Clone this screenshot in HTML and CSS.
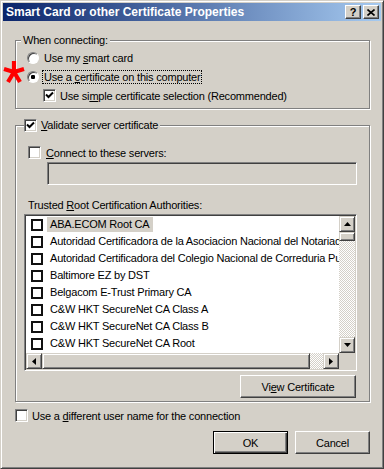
FILE: index.html
```html
<!DOCTYPE html>
<html lang="en">
<head>
  <meta charset="UTF-8" />
  <title>Smart Card or other Certificate Properties</title>
  <link rel="stylesheet" href="styles.css">
</head>
<body>
  <div class="window">
    <div class="titlebar">
      <span class="title">Smart Card or other Certificate Properties</span>
      <div class="caption-buttons">
        <button class="cap-btn help">?</button>
        <button class="cap-btn close">
          <svg width="8" height="7" viewBox="0 0 8 7"><path d="M0.5 0.5 L7.5 6.5 M7.5 0.5 L0.5 6.5" stroke="#000" stroke-width="1.6" fill="none"/></svg>
        </button>
      </div>
    </div>

    <div class="client">
      <fieldset class="group group-connect">
        <legend>When connecting:</legend>
        <label class="row"><span class="radio"></span><span class="label">Use my <u>s</u>mart card</span></label>
        <label class="row"><span class="radio checked"></span><span class="label focus">Use a <u>c</u>ertificate on this computer</span></label>
        <label class="row indent"><span class="check checked"></span><span class="label">Use si<u>m</u>ple certificate selection (Recommended)</span></label>
      </fieldset>

      <fieldset class="group group-validate">
        <legend><span class="check checked"></span><span class="label"><u>V</u>alidate server certificate</span></legend>
        <label class="row"><span class="check"></span><span class="label"><u>C</u>onnect to these servers:</span></label>
        <div class="field disabled"></div>
        <div class="caption">Trusted <u>R</u>oot Certification Authorities:</div>

        <div class="listbox">
          <div class="items" id="certList"></div>
          <div class="vscroll">
            <div class="sb-btn"><svg width="7" height="4" viewBox="0 0 7 4"><path d="M3.5 0 L7 4 L0 4 Z" fill="#000"/></svg></div>
            <div class="sb-thumb v"></div>
            <div class="sb-track"></div>
            <div class="sb-btn"><svg width="7" height="4" viewBox="0 0 7 4"><path d="M0 0 L7 0 L3.5 4 Z" fill="#000"/></svg></div>
          </div>
          <div class="hscroll">
            <div class="sb-btn"><svg width="4" height="7" viewBox="0 0 4 7"><path d="M0 3.5 L4 0 L4 7 Z" fill="#000"/></svg></div>
            <div class="sb-thumb h"></div>
            <div class="sb-track"></div>
            <div class="sb-btn"><svg width="4" height="7" viewBox="0 0 4 7"><path d="M0 0 L4 3.5 L0 7 Z" fill="#000"/></svg></div>
          </div>
          <div class="corner"></div>
        </div>

        <div class="actions">
          <button class="btn view">Vi<u>e</u>w Certificate</button>
        </div>
      </fieldset>

      <label class="row bottom-check"><span class="check"></span><span class="label">Use a <u>d</u>ifferent user name for the connection</span></label>

      <div class="dialog-buttons">
        <button class="btn default">OK</button>
        <button class="btn">Cancel</button>
      </div>
    </div>

    <svg class="marker" width="22" height="24" viewBox="0 0 22 24">
      <path d="M11 12 L11 1 M11 12 L21 9 M11 12 L17 22 M11 12 L5 22 M11 12 L1 9" stroke="#ff0000" stroke-width="4.2" stroke-linecap="butt" fill="none"/>
    </svg>
  </div>

  <script>
    const certs = [
      "ABA.ECOM Root CA",
      "Autoridad Certificadora de la Asociacion Nacional del Notariado Mexicano",
      "Autoridad Certificadora del Colegio Nacional de Correduria Publica Mexicana",
      "Baltimore EZ by DST",
      "Belgacom E-Trust Primary CA",
      "C&W HKT SecureNet CA Class A",
      "C&W HKT SecureNet CA Class B",
      "C&W HKT SecureNet CA Root"
    ];

    const list = document.getElementById("certList");
    certs.forEach((name, i) => {
      const row = document.createElement("div");
      row.className = "item" + (i === 0 ? " selected" : "");
      const box = document.createElement("span");
      box.className = "flat-check";
      const text = document.createElement("span");
      text.className = "item-text";
      text.textContent = name;
      row.appendChild(box);
      row.appendChild(text);
      list.appendChild(row);
    });
  </script>
</body>
</html>
```

FILE: styles.css
```css
body { margin: 0; background: #d4d0c8; }

.window {
  position: relative;
  width: 384px; height: 469px; box-sizing: border-box;
  background: #d4d0c8; padding: 2px;
  border: 1px solid; border-color: #d4d0c8 #404040 #404040 #d4d0c8;
  box-shadow: inset 1px 1px #fff, inset -1px -1px #808080;
  font-family: "Liberation Sans", Arial, sans-serif; font-size: 11px; color: #000;
  letter-spacing: -0.2px;
}

/* title bar */
.titlebar {
  height: 18px; display: flex; align-items: center; justify-content: space-between;
  padding: 0 2px 0 3px;
  background: linear-gradient(to right, #0a246a, #a6caf0);
}
.title { color: #fff; font-weight: bold; font-size: 12px; letter-spacing: 0; }
.caption-buttons { display: flex; gap: 2px; }
.cap-btn {
  width: 16px; height: 14px; padding: 0; margin: 0; box-sizing: border-box;
  display: flex; align-items: center; justify-content: center;
  background: #d4d0c8; border: 1px solid; border-color: #fff #404040 #404040 #fff;
  box-shadow: inset -1px -1px #808080;
  font-family: "Liberation Sans", Arial, sans-serif; font-weight: bold; font-size: 11px; line-height: 1;
}

/* client area */
.client { padding: 13px 11px 0 12px; display: flex; flex-direction: column; }

.group {
  margin: 0; min-width: 0;
  border: 1px solid #808080;
  box-shadow: inset 1px 1px #fff, 1px 1px #fff;
}
.group legend {
  background: #d4d0c8; line-height: 13px; height: 13px;
  display: flex; align-items: center; gap: 4px;
}

.group-connect { padding: 1px 11px 3px 11px; }
.group-connect legend { margin-left: -6px; padding: 0 2px; }

.group-validate { margin-top: 9px; padding: 13px 12px 3px 12px; display: flex; flex-direction: column; }
.group-validate legend { margin-left: -4px; padding: 0 2px 0 0; height: 14px; }

.row { display: flex; align-items: center; height: 19px; gap: 5px; }
.row.indent { margin-left: 16px; gap: 4px; }
.group-validate .row { height: 15px; gap: 5px; }
.label u { text-decoration: underline; text-underline-offset: 1px; }
.focus { outline: 1px dotted #000; outline-offset: 0; padding: 0 1px; margin-left: -1px; }

/* 3d controls */
.radio {
  width: 12px; height: 12px; box-sizing: border-box; border-radius: 50%; flex: none;
  border: 1px solid; border-color: #808080 #fff #fff #808080;
  box-shadow: inset 1px 1px #404040;
  background: #fff;
}
.radio.checked { background: radial-gradient(circle, #000 0 2px, #fff 2.4px); }

.check {
  width: 13px; height: 13px; box-sizing: border-box; flex: none;
  border: 1px solid; border-color: #808080 #fff #fff #808080;
  box-shadow: inset 1px 1px #404040, inset -1px -1px #d4d0c8;
  background: #fff;
}
.check.checked {
  background: #fff url("data:image/svg+xml,%3Csvg xmlns='http://www.w3.org/2000/svg' width='11' height='11'%3E%3Cpath d='M2 4.5 L4.5 7 L9 2.5' stroke='%23000' stroke-width='2' fill='none'/%3E%3C/svg%3E") no-repeat 0 0;
}

.field {
  height: 23px; box-sizing: border-box; margin: 2px 0 0 19px;
  border: 1px solid; border-color: #808080 #fff #fff #808080;
  box-shadow: inset 1px 1px #404040, inset -1px -1px #d4d0c8;
}
.field.disabled { background: #d4d0c8; }

.caption { margin-top: 14px; line-height: 13px; }

/* list box */
.listbox {
  margin: 2px 0 0 -4px; height: 157px; box-sizing: border-box;
  border: 1px solid; border-color: #808080 #fff #fff #808080;
  box-shadow: inset 1px 1px #404040, inset -1px -1px #d4d0c8;
  padding: 1px;
  display: grid; grid-template-columns: 1fr 16px; grid-template-rows: 1fr 16px;
  background: #fff;
}
.items { overflow: hidden; padding-left: 5px; font-size: 11px; }
.item { height: 17px; display: flex; align-items: center; white-space: nowrap; }
.flat-check { width: 12px; height: 12px; box-sizing: border-box; border: 2px solid #111; flex: none; background: #fff; }
.item-text { margin-left: 4px; padding: 0 3px; line-height: 15px; }
.item.selected .item-text { background: #d4d0c8; }

.vscroll, .hscroll { display: flex; }
.vscroll { flex-direction: column; }
.sb-btn, .sb-thumb {
  box-sizing: border-box; background: #d4d0c8; flex: none;
  border: 1px solid; border-color: #d4d0c8 #404040 #404040 #d4d0c8;
  box-shadow: inset 1px 1px #fff, inset -1px -1px #808080;
}
.sb-btn { width: 16px; height: 16px; display: flex; align-items: center; justify-content: center; }
.sb-thumb.v { height: 9px; }
.sb-thumb.h { width: 268px; }
.sb-track {
  flex: 1;
  background: repeating-conic-gradient(#fff 0 25%, #d4d0c8 0 50%) 0 0 / 2px 2px;
}
.corner { background: #d4d0c8; }

.actions { display: flex; justify-content: flex-end; margin-top: 4px; margin-right: 1px; }

/* push buttons */
.btn {
  height: 23px; width: 75px; margin: 0; padding: 0; box-sizing: border-box;
  background: #d4d0c8; color: #000;
  border: 1px solid; border-color: #fff #404040 #404040 #fff;
  box-shadow: inset -1px -1px #808080;
  font-family: "Liberation Sans", Arial, sans-serif; font-size: 11px; letter-spacing: -0.2px;
}
.btn.view { width: 116px; }
.btn.default {
  border: 1px solid #000;
  box-shadow: inset 1px 1px #fff, inset -1px -1px #404040, inset -2px -2px #808080;
}

.bottom-check { margin-top: 6px; height: 15px; gap: 4px; }

.dialog-buttons { display: flex; justify-content: flex-end; gap: 7px; margin-top: 8px; }

/* red annotation star over the dialog */
.marker { position: absolute; left: 2px; top: 59px; }
```
